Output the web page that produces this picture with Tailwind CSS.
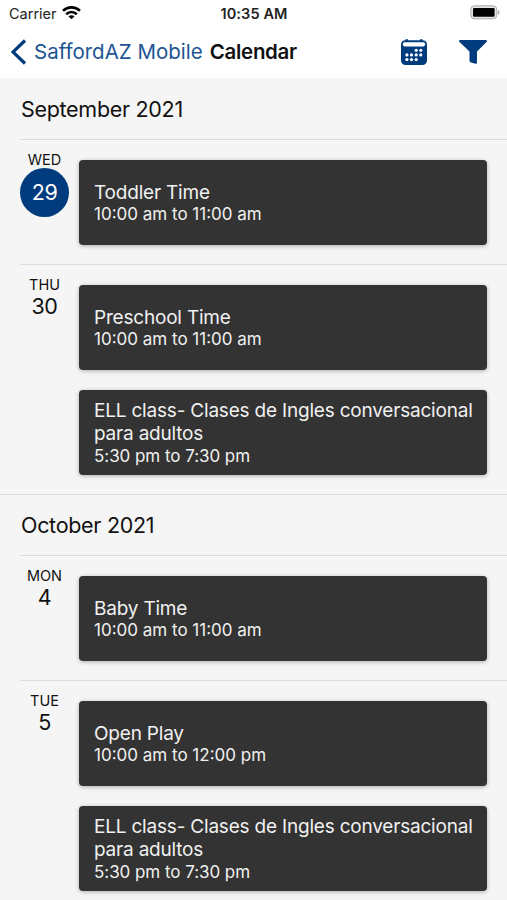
<!DOCTYPE html>
<html lang="en">
  <head>
    <meta charset="UTF-8" />
    <meta name="viewport" content="width=device-width, initial-scale=1.0" />
    <title>Calendar</title>
    <script src="https://cdn.jsdelivr.net/npm/@tailwindcss/browser@4"></script>
  </head>
  <body class="h-[900px] overflow-hidden bg-[#f5f5f5] font-['Inter',sans-serif] text-[#111]">
    <header class="h-[78px] bg-white">
      <!-- Status bar -->
      <div class="grid h-7 grid-cols-3 items-center pr-[7px] pl-[9px]">
        <div class="flex items-center gap-[5px]">
          <span class="text-[14.5px] text-[#222]">Carrier</span>
          <svg class="-mt-[3px] h-[13px] w-[19px]" viewBox="0 0 19 13" fill="none" stroke="#000" stroke-width="2.6">
            <path d="M1 4.8a12.2 12.2 0 0 1 17 0" />
            <path d="M4.2 8.200a7.600 7.600 0 0 1 10.600 0" />
            <path d="M9.500 13.200 6.500 10.600a4.200 4.200 0 0 1 6 0z" fill="#000" stroke="none" />
          </svg>
        </div>
        <div class="-ml-px text-center text-[14.5px] font-semibold tracking-[0.1px] whitespace-nowrap text-[#222]">10:35 AM</div>
        <svg class="-mt-[3px] h-[15px] w-[30px] justify-self-end" viewBox="0 0 30 15">
          <rect x=".8" y=".8" width="26" height="13" rx="3.6" fill="#e4e4e4" stroke="#aaa" />
          <rect x="3" y="3" width="21.6" height="8.8" rx="1.2" fill="#000" />
          <path d="M28 5v5a2.8 2.8 0 0 0 0-5z" fill="#aaa" />
        </svg>
      </div>
      <!-- Navigation bar -->
      <div class="flex h-[49px] items-center pr-5 pl-[11px]">
        <svg class="-mt-0.5 h-[26px] w-4" viewBox="0 0 16 26" fill="none" stroke="#003c7d" stroke-width="3.2">
          <path d="M14 1.5 2 13 14 24.5" />
        </svg>
        <a class="ml-[7px] text-[20.5px] whitespace-nowrap text-[#205493]">SaffordAZ Mobile</a>
        <h1 class="ml-[7px] text-[20.5px] font-semibold tracking-[-0.3px]">Calendar</h1>
        <svg class="-mt-0.5 ml-auto h-[26px] w-[26px]" viewBox="0 0 26 26">
          <path d="M4.500 1.200V.3h2.500v.9h12V.3h2.500v.9a4.200 4.200 0 0 1 4.500 4.200v16.100a4.500 4.500 0 0 1-4.500 4.500h-17A4.500 4.500 0 0 1 0 21.500V5.400a4.200 4.200 0 0 1 4.500-4.200z" fill="#003c7d" />
          <rect x="1.800" y="3.200" width="22.400" height="4.200" rx="1.800" fill="#fff" />
          <g fill="#fff">
            <circle cx="15.200" cy="11.300" r="1.600" />
            <circle cx="19.800" cy="11.300" r="1.600" />
            <circle cx="5.900" cy="15.900" r="1.600" />
            <circle cx="10.500" cy="15.900" r="1.600" />
            <circle cx="15.200" cy="15.900" r="1.600" />
            <circle cx="19.800" cy="15.900" r="1.600" />
            <circle cx="5.900" cy="20.600" r="1.600" />
            <circle cx="10.500" cy="20.600" r="1.600" />
            <circle cx="15.200" cy="20.600" r="1.600" />
          </g>
        </svg>
        <svg class="-mt-0.5 ml-8 h-6 w-7" viewBox="0 0 28 24">
          <path d="M1 0h26c1 0 1.200 1.200.5 2L18 11.500v11c0 1.200-1.200 1.700-2.200 1.100l-4.500-1.400a1.500 1.500 0 0 1-.8-1.200v-9.500L.5 2C-.2 1.200 0 0 1 0z" fill="#003c7d" />
        </svg>
      </div>
    </header>

    <main>
      <section>
        <h2 class="flex h-[61px] items-center pt-0.5 pl-[21px] text-[21.5px] tracking-[-0.3px]">September 2021</h2>
        <div class="ml-5 flex border-t border-[#dcdcdc] pt-5 pr-5 pb-[19px]">
          <div class="-mt-2 flex w-[49px] shrink-0 flex-col items-center">
            <span class="text-[14.5px] leading-[15px]">WED</span>
            <span class="mt-px flex h-[49px] w-[49px] items-center justify-center rounded-full bg-[#003c7d] text-[21.5px] tracking-[-0.5px] text-white">29</span>
          </div>
          <div class="ml-2.5 flex min-w-0 flex-1 flex-col gap-5">
            <article class="flex h-[85px] flex-col justify-center rounded bg-[#333] px-[15px] pt-px text-[#f0f0f0] shadow-[0_1px_4px_rgba(0,0,0,0.3)]">
              <h3 class="text-[19px] leading-[23px] tracking-[-0.2px]">Toddler Time</h3>
              <p class="text-[17px] leading-[21px]">10:00 am to 11:00 am</p>
            </article>
          </div>
        </div>
        <div class="ml-5 flex border-t border-[#dcdcdc] pt-5 pr-5 pb-[19px]">
          <div class="-mt-2 flex w-[49px] shrink-0 flex-col items-center">
            <span class="text-[14.5px] leading-[15px]">THU</span>
            <span class="text-[21.5px] leading-7 tracking-[-0.5px]">30</span>
          </div>
          <div class="ml-2.5 flex min-w-0 flex-1 flex-col gap-5">
            <article class="flex h-[85px] flex-col justify-center rounded bg-[#333] px-[15px] pt-px text-[#f0f0f0] shadow-[0_1px_4px_rgba(0,0,0,0.3)]">
              <h3 class="text-[19px] leading-[23px] tracking-[-0.2px]">Preschool Time</h3>
              <p class="text-[17px] leading-[21px]">10:00 am to 11:00 am</p>
            </article>
            <article class="flex h-[85px] flex-col justify-center rounded bg-[#333] px-[15px] text-[#f0f0f0] shadow-[0_1px_4px_rgba(0,0,0,0.3)]">
              <h3 class="text-[19px] leading-[23px] tracking-[-0.2px] whitespace-nowrap">ELL class- Clases de Ingles conversacional<br />para adultos</h3>
              <p class="text-[17px] leading-[22px] tracking-[-0.05px]">5:30 pm to 7:30 pm</p>
            </article>
          </div>
        </div>
      </section>

      <section>
        <h2 class="flex h-[61px] items-center border-t border-[#dcdcdc] pl-[21px] text-[21.5px] tracking-[-0.3px]">October 2021</h2>
        <div class="ml-5 flex border-t border-[#dcdcdc] pt-5 pr-5 pb-[19px]">
          <div class="-mt-2 flex w-[49px] shrink-0 flex-col items-center">
            <span class="text-[14.5px] leading-[15px]">MON</span>
            <span class="text-[21.5px] leading-7 tracking-[-0.5px]">4</span>
          </div>
          <div class="ml-2.5 flex min-w-0 flex-1 flex-col gap-5">
            <article class="flex h-[85px] flex-col justify-center rounded bg-[#333] px-[15px] pt-px text-[#f0f0f0] shadow-[0_1px_4px_rgba(0,0,0,0.3)]">
              <h3 class="text-[19px] leading-[23px] tracking-[-0.2px]">Baby Time</h3>
              <p class="text-[17px] leading-[21px]">10:00 am to 11:00 am</p>
            </article>
          </div>
        </div>
        <div class="ml-5 flex border-t border-[#dcdcdc] pt-5 pr-5 pb-[19px]">
          <div class="-mt-2 flex w-[49px] shrink-0 flex-col items-center">
            <span class="text-[14.5px] leading-[15px]">TUE</span>
            <span class="text-[21.5px] leading-7 tracking-[-0.5px]">5</span>
          </div>
          <div class="ml-2.5 flex min-w-0 flex-1 flex-col gap-5">
            <article class="flex h-[85px] flex-col justify-center rounded bg-[#333] px-[15px] pt-px text-[#f0f0f0] shadow-[0_1px_4px_rgba(0,0,0,0.3)]">
              <h3 class="text-[19px] leading-[23px] tracking-[-0.2px]">Open Play</h3>
              <p class="text-[17px] leading-[21px]">10:00 am to 12:00 pm</p>
            </article>
            <article class="flex h-[85px] flex-col justify-center rounded bg-[#333] px-[15px] text-[#f0f0f0] shadow-[0_1px_4px_rgba(0,0,0,0.3)]">
              <h3 class="text-[19px] leading-[23px] tracking-[-0.2px] whitespace-nowrap">ELL class- Clases de Ingles conversacional<br />para adultos</h3>
              <p class="text-[17px] leading-[22px] tracking-[-0.05px]">5:30 pm to 7:30 pm</p>
            </article>
          </div>
        </div>
      </section>
    </main>
  </body>
</html>
